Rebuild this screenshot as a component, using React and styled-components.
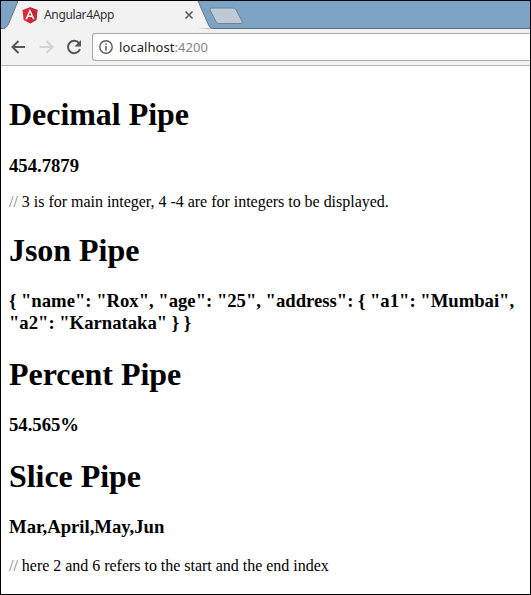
import React from "react";
import styled, { createGlobalStyle } from "styled-components";

const GlobalStyle = createGlobalStyle`
  * { box-sizing: border-box; }
  body { margin: 0; background: #fff; }
`;

const Window = styled.div`
  width: 531px;
  height: 595px;
  border: 1px solid #000;
  background: #fff;
  overflow: hidden;
`;

const TabStrip = styled.header`
  display: flex;
  height: 28px;
  background: #7da3c4;
  border-bottom: 1px solid #5c6b7c;
`;

const TabEdge = styled.svg`
  display: block;
  flex: none;
  height: 28px;
`;

const Tab = styled.div`
  display: flex;
  align-items: center;
  width: 179px;
  height: 28px;
  padding-left: 4px;
  background: #f2f2f2;
`;

const TabTitle = styled.span`
  flex: 1;
  margin-left: 6px;
  font: 12px/16px "Noto Sans", sans-serif;
  letter-spacing: -0.35px;
  color: #333;
  white-space: nowrap;
`;

const CloseIcon = styled.svg`
  display: block;
  flex: none;
  margin-right: 3px;
`;

const Toolbar = styled.nav`
  display: flex;
  height: 37px;
  padding-top: 4px;
  background: #f2f2f2;
  border-bottom: 1px solid #b4b4b4;
`;

const NavIcons = styled.svg`
  display: block;
  flex: none;
`;

const AddressBar = styled.div`
  display: flex;
  flex: 1;
  align-items: center;
  height: 28px;
  padding-left: 6px;
  background: #fff;
  border: 1px solid #a9a9a9;
  border-right: 0;
  border-radius: 3px 0 0 3px;
`;

const Address = styled.span`
  margin-left: 6px;
  font: 13px/18px "Noto Sans", sans-serif;
  letter-spacing: 0.06px;
  color: #222;
`;

const Port = styled.span`
  color: #858585;
`;

const Page = styled.main`
  padding: 30px 7px 0 8px;
  font-family: "Liberation Serif", "Times New Roman", serif;
  color: #000;
`;

const Title = styled.h1`
  margin: 0 0 ${(p) => p.$gap || 22}px;
  font-size: 32px;
  line-height: 36px;
  letter-spacing: -0.04px;
`;

const Output = styled.h3`
  margin: 0 0 ${(p) => p.$gap || 22}px;
  font-size: 18.72px;
  line-height: 22px;
  letter-spacing: -0.02px;
`;

const Note = styled.p`
  margin: 0 0 21px;
  font-size: 16px;
  line-height: 18px;
  letter-spacing: -0.02px;
  white-space: nowrap;
`;

const Slashes = styled.span`
  color: #777;
`;

export default function App() {
  return (
    <>
      <GlobalStyle />
      <Window>
        <TabStrip>
          <TabEdge width="17" viewBox="0 0 17 28">
            <path d="M17 0 7.5 23Q5.5 27 2 28H17Z" fill="#f2f2f2" />
            <path d="M17 0 7.5 23Q5.5 27 2 28" fill="none" stroke="#63788c" />
          </TabEdge>
          <Tab>
            <svg width="16" height="17" viewBox="0 0 16 17">
              <path d="M8 .2 15.5 3 14.3 13 8 16.6 1.7 13 .5 3Z" fill="#dd2936" />
              <path d="M8 .2 15.5 3 14.3 13 8 16.6Z" fill="#bd2934" />
              <path d="M8 2 12.6 12.3H10.9L9.9 10H6.1L5.1 12.3H3.4ZM8 5.3 6.7 8.5H9.3Z" fill="#fff" fillRule="evenodd" />
            </svg>
            <TabTitle>Angular4App</TabTitle>
            <CloseIcon width="10" height="10" viewBox="0 0 10 10">
              <path d="m1.5 1.5 7 7m0-7-7 7" stroke="#5a5a5a" strokeWidth="1.6" />
            </CloseIcon>
          </Tab>
          <TabEdge width="50" viewBox="0 0 50 28">
            <path d="M1 0 12 25Q13 27.5 16 27.5L0 28V0Z" fill="#f2f2f2" />
            <path d="M1 0 12 25Q13 27.5 16 27.5" fill="none" stroke="#63788c" />
            <path d="M14.5 7H36Q38 7 39 9L45 20Q46 22.5 44 22.5H22Q20 22.5 19 20.5L13 9Q12 7 14.5 7Z" fill="#bdc9d4" stroke="#6d8296" />
          </TabEdge>
        </TabStrip>
        <Toolbar>
          <NavIcons width="91" height="28" viewBox="0 0.5 91 28" fill="none" strokeWidth="2">
            <path d="M24 14.5H11.5M17.5 8.5l-6 6 6 6" stroke="#555" />
            <path d="M38.5 14.5H51M45.5 8.5l6 6-6 6" stroke="#d3d3d3" />
            <path d="M78.1 10.7A6.2 6.2 0 1 0 79 16.6" stroke="#555" />
            <path d="M80 7.5V14h-6.5Z" fill="#555" />
          </NavIcons>
          <AddressBar>
            <svg width="14" height="14" viewBox="0 0 14 14">
              <circle cx="7" cy="7" r="6.2" fill="none" stroke="#5a5a5a" strokeWidth="1.4" />
              <path d="M7 6v4.5M7 3.4V5" stroke="#5a5a5a" strokeWidth="1.5" />
            </svg>
            <Address>localhost<Port>:4200</Port></Address>
          </AddressBar>
        </Toolbar>
        <Page>
          <Title $gap={23}>Decimal Pipe</Title>
          <Output $gap={16}>454.7879</Output>
          <Note><Slashes>//</Slashes> 3 is for main integer, 4 -4 are for integers to be displayed.</Note>
          <Title>Json Pipe</Title>
          <Output>{'{ "name": "Rox", "age": "25", "address": { "a1": "Mumbai", "a2": "Karnataka" } }'}</Output>
          <Title>Percent Pipe</Title>
          <Output>54.565%</Output>
          <Title>Slice Pipe</Title>
          <Output $gap={19}>Mar,April,May,Jun</Output>
          <Note><Slashes>//</Slashes> here 2 and 6 refers to the start and the end index</Note>
        </Page>
      </Window>
    </>
  );
}
